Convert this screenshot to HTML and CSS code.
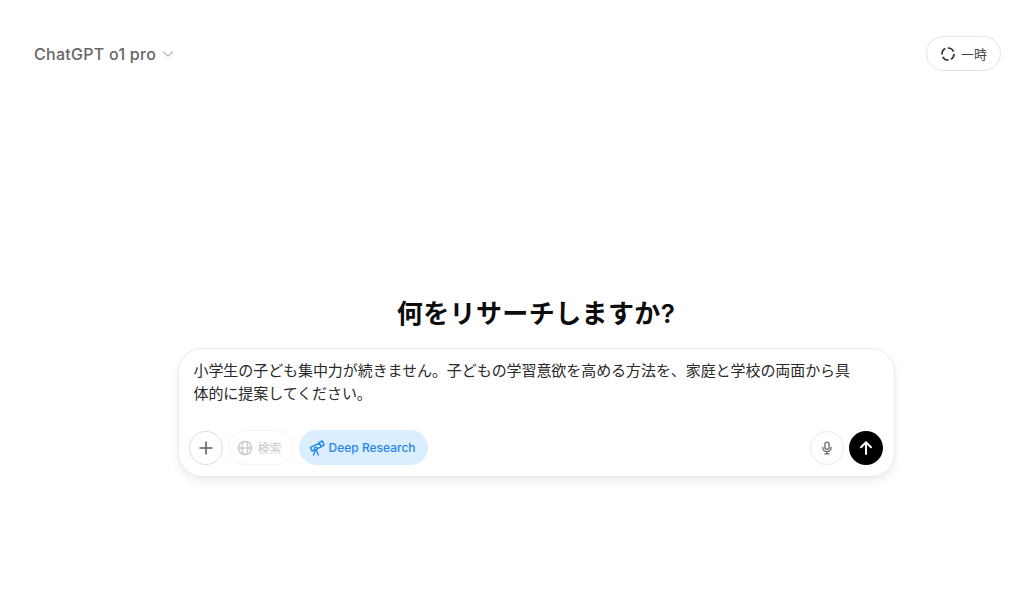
FILE: index.html
```html
<!DOCTYPE html>
<html lang="ja">
<head>
<meta charset="utf-8">
<title>ChatGPT</title>
<link rel="stylesheet" href="styles.css">
</head>
<body>
<div class="page">
  <header class="top">
    <div class="model">
      <span>ChatGPT o1 pro</span>
      <svg class="chev" viewBox="0 0 12 12" width="12" height="12"><path d="M1.500 4 6 8.200 10.500 4" fill="none" stroke="#b0b0b0" stroke-width="1.100" stroke-linecap="round" stroke-linejoin="round"/></svg>
    </div>
    <button class="temp">
      <svg viewBox="0 0 16 16" width="16" height="16"><circle cx="8" cy="8" r="6" fill="none" stroke="#333" stroke-width="1.700" stroke-dasharray="7 2.420" stroke-dashoffset="1"/></svg>
      <span>一時</span>
    </button>
  </header>
  <main class="center">
    <h1 class="title">何をリサーチしますか?</h1>
    <section class="composer">
      <p class="prompt">小学生の子ども集中力が続きません。子どもの学習意欲を高める方法を、家庭と学校の両面から具体的に提案してください。</p>
      <div class="tools">
        <button class="round">
          <svg viewBox="0 0 16 16" width="16" height="16"><path d="M8 2v12M2 8h12" fill="none" stroke="#5d5d5d" stroke-width="1.500" stroke-linecap="round"/></svg>
        </button>
        <button class="pill search">
          <svg viewBox="0 0 16 16" width="16" height="16"><g fill="none" stroke="#c8c8c8" stroke-width="1.300"><circle cx="8" cy="8" r="6.600"/><ellipse cx="8" cy="8" rx="3" ry="6.600"/><path d="M1.400 8h13.200"/></g></svg>
          <span>検索</span>
        </button>
        <button class="pill deep">
          <svg viewBox="0 0 16 16" width="16" height="16"><g fill="none" stroke="#2585e8" stroke-width="1.400" stroke-linejoin="round" stroke-linecap="round"><path d="M1.300 7.400 10.500 3.200l1.700 3.600-9.200 4.200z"/><path d="m10.200 2.400 3.200-1.400 1.700 4.200-2.900 1.300"/><path d="M7.200 9.500 9.300 15M6.300 10 4.600 15"/><circle cx="6.800" cy="8.400" r="1.300" fill="#daeeff"/></g></svg>
          <span>Deep Research</span>
        </button>
        <div class="spacer"></div>
        <button class="round mic">
          <svg viewBox="0 0 16 16" width="14" height="14"><g fill="none" stroke="#6a6a6a" stroke-width="1.500" stroke-linecap="round"><rect x="5.600" y="1.200" width="4.800" height="8.400" rx="2.400"/><path d="M3.200 7.400a4.800 4.800 0 0 0 9.600 0M8 12.400v2.400M5.600 14.800h4.800"/></g></svg>
        </button>
        <button class="send">
          <svg viewBox="0 0 18 18" width="18" height="18"><path d="M9 15V3.400M4 8.200l5-5 5 5" fill="none" stroke="#fff" stroke-width="2" stroke-linecap="round" stroke-linejoin="round"/></svg>
        </button>
      </div>
    </section>
  </main>
</div>
</body>
</html>
```
FILE: styles.css
```css
* { box-sizing: border-box; }
html, body { margin: 0; padding: 0; height: 100%; background: #fff; overflow: hidden; }
body { font-family: Inter, "Noto Sans CJK JP", "Liberation Sans", sans-serif; color: #0d0d0d; }
button { font: inherit; margin: 0; padding: 0; background: #fff; cursor: pointer; }
.page { width: 1024px; height: 597px; display: flex; flex-direction: column; }
.top { display: flex; justify-content: space-between; align-items: center; padding: 36px 23px 0 34px; height: 71px; }
.model { display: flex; align-items: center; gap: 6px; font-size: 16px; font-weight: 500; color: #666; letter-spacing: 0.27px; }
.temp { display: flex; align-items: center; gap: 5px; width: 75px; height: 35px; padding-left: 13px; border: 1px solid #e3e3e3; border-radius: 18px; font-size: 13px; color: #444; }
.center { display: flex; flex-direction: column; align-items: center; padding-top: 227px; padding-left: 48px; }
.title { margin: 0 0 18px; font-size: 26px; line-height: 32px; font-weight: 600; color: #0d0d0d; letter-spacing: 0.4px; }
.composer { width: 717px; height: 129px; padding: 10px 11px 11px 10px; border: 1px solid #ececec; border-radius: 24px; background: #fff; box-shadow: 0 4px 10px rgba(0,0,0,.08); display: flex; flex-direction: column; justify-content: space-between; }
.prompt { margin: 0; padding: 0 20px 0 5px; font-size: 15px; line-height: 23px; color: #2a2a2a; letter-spacing: -0.07px; }
.tools { display: flex; align-items: center; gap: 5px; }
.round { width: 34px; height: 34px; border: 1px solid #dedede; border-radius: 50%; display: flex; align-items: center; justify-content: center; }
.pill { height: 35px; border-radius: 18px; display: flex; align-items: center; gap: 5px; font-size: 12px; border: 1px solid transparent; }
.search { width: 65px; padding-left: 8px; border-color: #f5f5f5; color: #c8c8c8; }
.deep { width: 129px; margin-left: 1px; padding-left: 9px; gap: 4px; background: #daeeff; color: #2585e8; font-weight: 500; }
.spacer { flex: 1; }
.mic { border-color: #e8e8e8; }
.send { width: 34px; height: 34px; border: 0; border-radius: 50%; background: #000; display: flex; align-items: center; justify-content: center; }
```
